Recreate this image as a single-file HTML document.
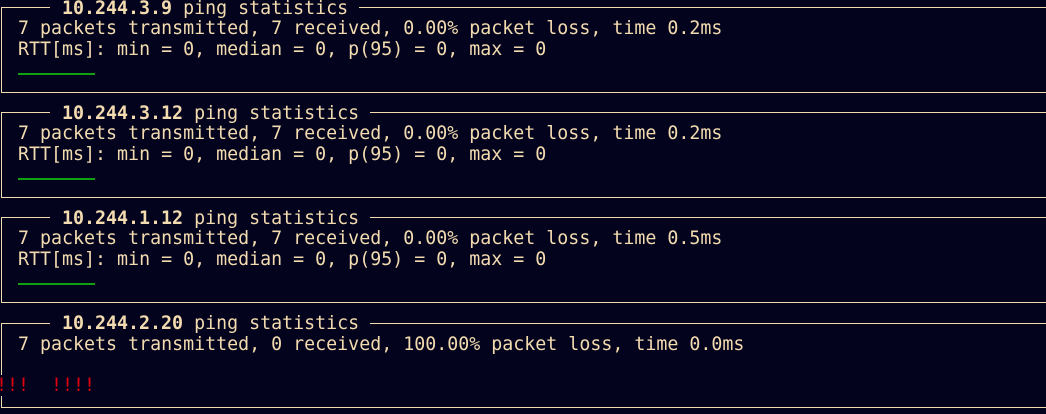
<!DOCTYPE html>
<html><head><style>
body{margin:0;width:1046px;height:414px;background:#03031d;overflow:hidden;position:relative;font-family:"DejaVu Sans Mono","Liberation Mono",monospace;font-size:18.3px;color:#f3dbb0}
.h{position:absolute;height:1px;background:#f3dbb0}
.v{position:absolute;width:1px;background:#f3dbb0}
.t{position:absolute;white-space:pre;line-height:21px}
b{font-weight:bold}
.g{position:absolute;height:2px;background:#10a010;left:18px;width:77px}
.r{color:#e00010}
</style></head><body>
<!-- box1 -->
<div class="h" style="left:1px;top:7px;width:49px"></div>
<div class="h" style="left:359px;top:7px;width:687px"></div>
<div class="v" style="left:1px;top:7px;height:86px"></div>
<div class="h" style="left:1px;top:92px;width:1045px"></div>
<div class="t" style="left:62px;top:-2px"><b>10.244.3.9</b> ping statistics</div>
<div class="t" style="left:18px;top:18px">7 packets transmitted, 7 received, 0.00% packet loss, time 0.2ms
RTT[ms]: min = 0, median = 0, p(95) = 0, max = 0</div>
<div class="g" style="top:73px"></div>
<!-- box2 -->
<div class="h" style="left:1px;top:112px;width:49px"></div>
<div class="h" style="left:370px;top:112px;width:676px"></div>
<div class="v" style="left:1px;top:112px;height:86px"></div>
<div class="h" style="left:1px;top:197px;width:1045px"></div>
<div class="t" style="left:62px;top:103px"><b>10.244.3.12</b> ping statistics</div>
<div class="t" style="left:18px;top:123px">7 packets transmitted, 7 received, 0.00% packet loss, time 0.2ms
RTT[ms]: min = 0, median = 0, p(95) = 0, max = 0</div>
<div class="g" style="top:178px"></div>
<!-- box3 -->
<div class="h" style="left:1px;top:217px;width:49px"></div>
<div class="h" style="left:370px;top:217px;width:676px"></div>
<div class="v" style="left:1px;top:217px;height:86px"></div>
<div class="h" style="left:1px;top:302px;width:1045px"></div>
<div class="t" style="left:62px;top:208px"><b>10.244.1.12</b> ping statistics</div>
<div class="t" style="left:18px;top:228px">7 packets transmitted, 7 received, 0.00% packet loss, time 0.5ms
RTT[ms]: min = 0, median = 0, p(95) = 0, max = 0</div>
<div class="g" style="top:283px"></div>
<!-- box4 -->
<div class="h" style="left:1px;top:323px;width:49px"></div>
<div class="h" style="left:370px;top:323px;width:676px"></div>
<div class="v" style="left:1px;top:323px;height:52px"></div>
<div class="v" style="left:1px;top:396px;height:12px"></div>
<div class="h" style="left:1px;top:407px;width:1045px"></div>
<div class="t" style="left:62px;top:313px"><b>10.244.2.20</b> ping statistics</div>
<div class="t" style="left:18px;top:334px">7 packets transmitted, 0 received, 100.00% packet loss, time 0.0ms</div>
<div class="t r" style="left:-4px;top:375px">!!!  !!!!</div>
</body></html>
